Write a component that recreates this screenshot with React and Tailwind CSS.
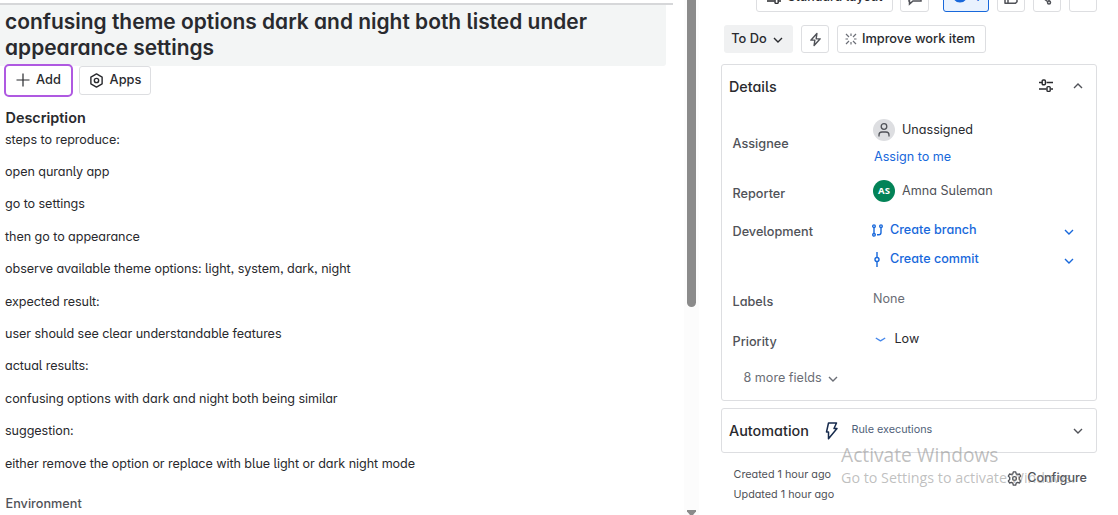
const steps = [
  'steps to reproduce:',
  'open quranly app',
  'go to settings',
  'then go to appearance',
  'observe available theme options: light, system, dark, night',
  'expected result:',
  'user should see clear understandable features',
  'actual results:',
  'confusing options with dark and night both being similar',
  'suggestion:',
  'either remove the option or replace with blue light or dark night mode',
];

function Icon({ className = '', size = 16, sw = 1.5, box = 16, children }) {
  return (
    <svg className={'shrink-0 ' + className} width={size} height={size} viewBox={`0 0 ${box} ${box}`} fill="none" stroke="currentColor" strokeWidth={sw}>
      {children}
    </svg>
  );
}

function Chevron({ className = '', up = false, size = 10 }) {
  return (
    <Icon className={className} size={size} box={10} sw={1.4}>
      <path d={up ? 'M1 7l4-4 4 4' : 'M1 3l4 4 4-4'} />
    </Icon>
  );
}

function Sliders({ className = '' }) {
  return (
    <Icon className={className} sw={1.4}>
      <path d="M1 4.500h3M8.500 4.500h6.500M1 11h7.500M13 11h2" />
      <rect x="4.200" y="2" width="3.200" height="4.800" rx="1" />
      <rect x="9" y="8.600" width="3.200" height="4.800" rx="1" />
    </Icon>
  );
}

const BTN = 'flex items-center justify-center rounded-[3px] border border-[#dddee1] bg-white whitespace-nowrap';

function Row({ className = '', label, labelClass = '', children }) {
  return (
    <div className={'flex items-start pl-[10.5px] ' + className}>
      <div className={'w-[140.5px] shrink-0 text-[12.7px] leading-5 font-[480] text-[#505258] ' + labelClass}>{label}</div>
      <div className="flex-1">{children}</div>
    </div>
  );
}

function LeftPane() {
  return (
    <main className="w-[673px] shrink-0 pt-[3px]">
      <div className="h-[2px] bg-[#d6d7d9]" />
      <h1 className="h-[61px] w-[666px] rounded-br-[3px] bg-[#f3f5f5] pt-[4px] pl-[5px] text-[20.95px] leading-[26px] font-semibold text-[#292a2e]">
        <span className="block whitespace-nowrap">confusing theme options dark and night both listed under</span>
        <span className="block whitespace-nowrap">appearance settings</span>
      </h1>
      <div className="-mt-[2px] flex items-center gap-[6px] pl-1 text-[12.8px] font-[480] text-[#292a2e]">
        <button className="flex h-[33px] w-[69px] items-center justify-center gap-[6px] rounded-[5px] border-2 border-[#af59e1] bg-white pb-px">
          <Icon size={14} box={14} sw={1.2}><path d="M7 .5v13M.5 7h13" /></Icon>
          Add
        </button>
        <button className={BTN + ' h-[29px] w-[72px] gap-[6px] pb-px'}>
          <Icon size={15} sw={1.5}>
            <path d="M8 1l6 3.500v7L8 15l-6-3.500v-7z" strokeLinejoin="round" />
            <circle cx="8" cy="8" r="2.300" />
          </Icon>
          Apps
        </button>
      </div>
      <h2 className="mt-[11px] pl-[5.5px] text-[14.4px] leading-5 font-semibold text-[#292a2e]">Description</h2>
      <div className="mt-[1.6px] flex flex-col gap-3 pl-[5px] text-[12.6px] leading-[20.4px] tracking-[-0.062px] text-[#292a2e]">
        {steps.map((s) => (
          <p key={s} className="whitespace-nowrap">{s}</p>
        ))}
      </div>
      <h3 className="mt-[20.4px] pl-[5.5px] text-[12.7px] leading-5 font-[480] text-[#505258]">Environment</h3>
    </main>
  );
}

function Scrollbar() {
  return (
    <div className="ml-[11px] flex w-[15px] shrink-0 flex-col items-center justify-between bg-[#fcfcfc]">
      <div className="h-[307px] w-[9px] rounded-b-full bg-[#8b8b8b]" />
      <svg width="9" height="5" viewBox="0 0 9 5"><path d="M0 0h9v1.500L6 5H3L0 1.500z" fill="#8b8b8b" /></svg>
    </div>
  );
}

function Toolbar() {
  return (
    <div className="-mt-[17px] flex pl-[35px] text-[12.4px] font-[480] text-[#505258]">
      <button className={BTN + ' h-[29px] w-[137px] gap-[5px] text-[#292a2e]'}><Sliders />Standard layout</button>
      <button className={BTN + ' ml-[7px] h-[29px] w-[29px]'}>
        <Icon><path d="M2 2.500h12v8.500H6l-3.500 3V11H2z" /></Icon>
      </button>
      <button className="ml-[14px] flex h-[29px] w-[46px] items-center justify-center gap-[6px] rounded-[3px] border border-[#1868db] bg-[#e9f2fe] text-[#1868db]">
        <Icon><path d="M2 8c2.500-5 9.500-5 12 0-2.500 5-9.500 5-12 0z" fill="currentColor" /></Icon>1
      </button>
      <button className={BTN + ' ml-2 h-[29px] w-7'}>
        <Icon><path d="M2 6h3v7.200H2zM5 6l3-4 2 1-.5 3H14v5.700L12.500 13.200H5" strokeLinejoin="round" /></Icon>
      </button>
      <button className={BTN + ' ml-2 h-[29px] w-7'}>
        <Icon><circle cx="10" cy="12.500" r="1.500" /><path d="M4 8l4.500 3.500M10 11V5" /></Icon>
      </button>
      <button className={BTN + ' ml-2 h-[29px] w-7'} />
    </div>
  );
}

function Actions() {
  return (
    <div className="mt-[13px] flex gap-2 pl-[3px] text-[12.8px] font-[480] text-[#292a2e]">
      <button className="flex h-7 w-[69px] items-center justify-center gap-[6px] rounded-[3px] bg-[#f0f1f2] pr-[3px]">
        To Do <Chevron className="mt-[2px]" />
      </button>
      <button className={BTN + ' h-7 w-7 text-[#505258]'}>
        <Icon size={15}><path d="M9.500 1.500L3 8.700h4.300L6.500 14.500 13 7.300H8.700z" strokeLinejoin="round" /></Icon>
      </button>
      <button className={BTN + ' h-7 w-[149px] gap-[5px] pr-[3px]'}>
        <Icon size={12} box={12} sw={1.2} className="text-[#6b6e76]">
          <path d="M1 1l3 3M11 1L8 4M1 11l3-3M11 11L8 8M6 .5v2.500M6 9v2.500M.5 6H3M9 6h2.500" />
        </Icon>
        Improve work item
      </button>
    </div>
  );
}

function DevLink({ icon, children }) {
  return (
    <div className="flex h-5 items-center text-[12.6px] font-medium text-[#1868db]">
      <span className="flex w-[17px]">{icon}</span>
      <span className="flex-1">{children}</span>
      <Chevron className="mt-[3px] mr-[22px]" />
    </div>
  );
}

function Details() {
  return (
    <section className="mt-[11px] h-[337px] w-[376px] rounded-[3px] border border-[#dddee1] text-[12.6px] text-[#292a2e]">
      <div className="flex h-[43px] items-center pr-[13px] pl-[7px]">
        <h2 className="flex-1 text-[14.3px] font-[480]">Details</h2>
        <Sliders className="mr-[19px] -mt-px" />
        <Chevron up className="-mt-[2px] text-[#505258]" />
      </div>
      <Row className="h-[68px]" label="Assignee" labelClass="pt-[26px]">
        <div className="mt-[11px] flex h-[22px] items-center gap-[7px]">
          <span className="flex size-[22px] items-center justify-center rounded-full bg-[#dddee1] text-[#505258]">
            <Icon size={14} box={14} sw={1.3}><circle cx="7" cy="3.500" r="2.800" /><path d="M2 13.500v-1.500a3 3 0 0 1 3-3h4a3 3 0 0 1 3 3v1.500" /></Icon>
          </span>
          Unassigned
        </div>
        <div className="mt-[6px] pl-px leading-5 text-[#1868db]">Assign to me</div>
      </Row>
      <Row className="h-[38px]" label="Reporter" labelClass="pt-2">
        <div className="mt-1 flex h-[22px] items-center gap-[7px] text-[#505258]">
          <span className="flex size-[22px] items-center justify-center rounded-full bg-[#038357] font-['Noto_Sans',sans-serif] text-[9.500px] font-bold text-white">AS</span>
          Amna Suleman
        </div>
      </Row>
      <Row className="h-[67px]" label="Development" labelClass="pt-2">
        <div className="flex flex-col gap-[9px] pt-[6px]">
          <DevLink icon={
            <svg width="11" height="13" viewBox="0 0 11 13" fill="none" stroke="currentColor" strokeWidth="1.4" className="-ml-[1.5px] mt-px">
              <circle cx="2" cy="2.200" r="1.300" /><circle cx="2" cy="10.800" r="1.300" /><circle cx="9" cy="2.200" r="1.300" />
              <path d="M2 3.500v6M9 3.500v5q0 2.300-2.300 2.300H5" />
            </svg>
          }>Create branch</DevLink>
          <DevLink icon={
            <svg width="8" height="15" viewBox="0 0 8 15" fill="none" stroke="currentColor" strokeWidth="1.4">
              <circle cx="4" cy="7.500" r="2" /><path d="M4 0v5.500M4 9.500V15" />
            </svg>
          }>Create commit</DevLink>
        </div>
      </Row>
      <Row className="h-10" label="Labels" labelClass="pt-[11px]">
        <div className="pt-2 leading-5 text-[#6b6e76]">None</div>
      </Row>
      <Row className="h-10" label="Priority" labelClass="pt-[11px]">
        <div className="flex items-center pt-2 pl-[1.5px] leading-5">
          <Icon size={11} box={11} sw={1.4} className="mr-[9px] text-[#4688ec]"><path d="M.8 4l4.700 2.800L10.200 4" strokeLinejoin="round" /></Icon>
          Low
        </div>
      </Row>
      <div className="flex items-center gap-[6px] pt-[7px] pl-[21.500px] leading-5 text-[#6b6e76]">
        8 more fields <Chevron className="mt-[2px]" />
      </div>
    </section>
  );
}

function RightPane() {
  return (
    <aside className="relative ml-[22px] w-[397px] shrink-0">
      <Toolbar />
      <Actions />
      <Details />
      <section className="mt-[7px] flex h-[45px] w-[376px] items-center rounded-[3px] border border-[#dddee1] pr-[13px] pl-[7px] text-[#292a2e]">
        <h2 className="w-[96px] text-[14.400px] font-[480]">Automation</h2>
        <svg width="13" height="18" viewBox="0 0 13 18" fill="none" stroke="#172b4d" strokeWidth="1.5" strokeLinejoin="round">
          <path d="M3.500 1h8L9 6.500h3L3.500 16.800V10H1.500z" />
        </svg>
        <span className="ml-[13.500px] flex-1 text-[10.800px] text-[#505f79]">Rule executions</span>
        <Chevron className="text-[#505258]" />
      </section>
      <footer className="flex w-[376px] justify-between pt-[12px] pr-[10px] pl-[12.500px] text-[10.800px] leading-5 text-[#505258]">
        <div>
          <p>Created 1 hour ago</p>
          <p>Updated 1 hour ago</p>
        </div>
        <button className="mt-[3px] flex h-5 items-center gap-[5px] text-[12.600px] font-medium">
          <Icon size={15} sw={1.400}>
            <path d="M6.700 1h2.600l.5 2 1.500.8 2-.6 1.300 2.300-1.500 1.500v2l1.500 1.500-1.300 2.300-2-.6-1.500.8-.5 2H6.700l-.5-2-1.500-.8-2 .6-1.300-2.300L2.900 9V7L1.400 5.500l1.300-2.300 2 .6L6.200 3z" strokeLinejoin="round" />
            <circle cx="8" cy="8" r="2" />
          </Icon>
          Configure
        </button>
      </footer>
      <div className="pointer-events-none absolute top-[443px] left-[120px] font-['Open_Sans',sans-serif] whitespace-nowrap text-[#8a8a8a]/55 [font-feature-settings:normal]">
        <p className="text-[19.200px] leading-6">Activate Windows</p>
        <p className="text-[14.300px] leading-[22px]">Go to Settings to activate Windows.</p>
      </div>
    </aside>
  );
}

export default function App() {
  return (
    <div className="flex h-[515px] w-[1118px] overflow-hidden bg-white font-['Inter','Liberation_Sans',sans-serif] [font-feature-settings:'cv11','cv05','ss03']">
      <LeftPane />
      <Scrollbar />
      <RightPane />
    </div>
  );
}
